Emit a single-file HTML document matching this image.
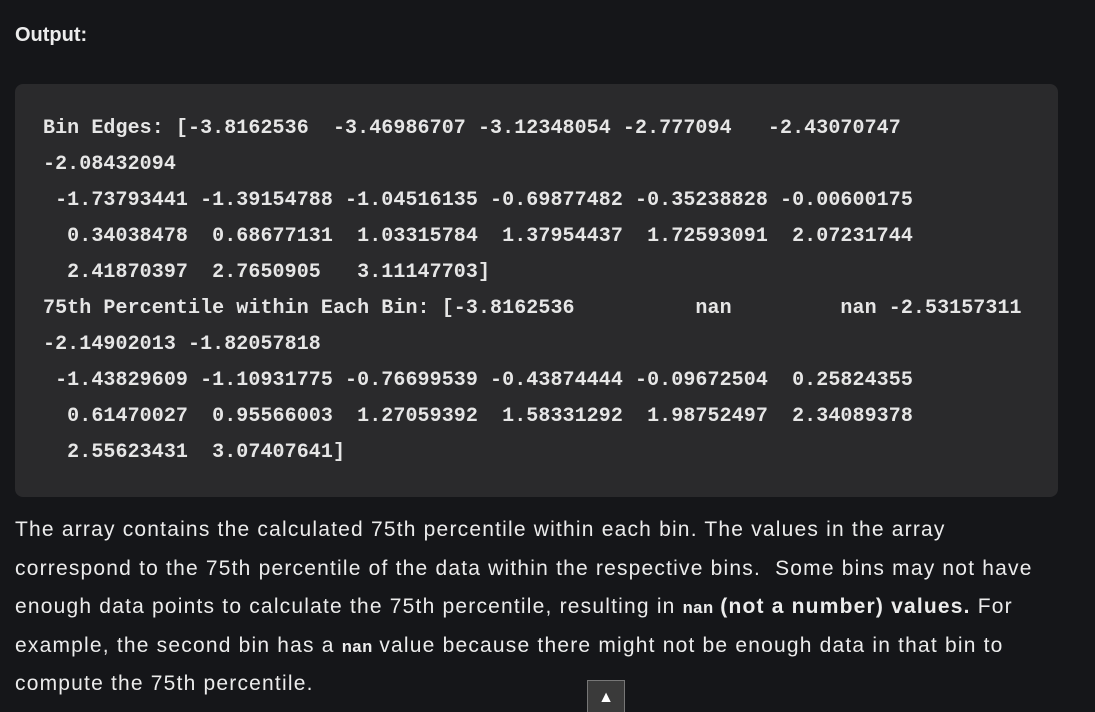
<!DOCTYPE html>
<html><head><meta charset="utf-8"><style>
html,body{margin:0;padding:0;background:#151619;width:1095px;height:712px;overflow:hidden}
body{font-family:"Liberation Sans",sans-serif;color:#ececec;position:relative}
.h{position:absolute;left:15px;top:24px;font-weight:bold;font-size:20px}
.code{position:absolute;left:15px;top:84px;width:1043px;height:413px;background:#2a2a2c;border-radius:8px}
pre{margin:0;position:absolute;left:43px;top:111px;font-family:"Liberation Mono",monospace;font-size:20px;line-height:36px;color:#e6e6e6;font-weight:bold;letter-spacing:0.08px}
p{position:absolute;left:15px;top:511px;width:1080px;margin:0;font-size:21px;line-height:38.5px;color:#ececec;white-space:nowrap;letter-spacing:1.2px}
code{font-family:"Liberation Mono",monospace;font-weight:bold;font-size:17px;line-height:1;letter-spacing:0}
.btn{position:absolute;left:587px;top:680px;width:36px;height:34px;background:#3a3a3a;border:1px solid #777;color:#fff;font-size:16px;text-align:center;line-height:34px}
</style></head><body>
<div class="h">Output:</div>
<div class="code"></div>
<pre>Bin Edges: [-3.8162536  -3.46986707 -3.12348054 -2.777094   -2.43070747
-2.08432094
 -1.73793441 -1.39154788 -1.04516135 -0.69877482 -0.35238828 -0.00600175
  0.34038478  0.68677131  1.03315784  1.37954437  1.72593091  2.07231744
  2.41870397  2.7650905   3.11147703]
75th Percentile within Each Bin: [-3.8162536          nan         nan -2.53157311
-2.14902013 -1.82057818
 -1.43829609 -1.10931775 -0.76699539 -0.43874444 -0.09672504  0.25824355
  0.61470027  0.95566003  1.27059392  1.58331292  1.98752497  2.34089378
  2.55623431  3.07407641]</pre>
<p>The array contains the calculated 75th percentile within each bin. The values in the array<br>correspond to the 75th percentile of the data within the respective bins.&nbsp; Some bins may not have<br>enough data points to calculate the 75th percentile, resulting in <code>nan</code> <b>(not a number) values.</b> For<br>example, the second bin has a <code>nan</code> value because there might not be enough data in that bin to<br>compute the 75th percentile.</p>
<div class="btn">▲</div>
</body></html>
